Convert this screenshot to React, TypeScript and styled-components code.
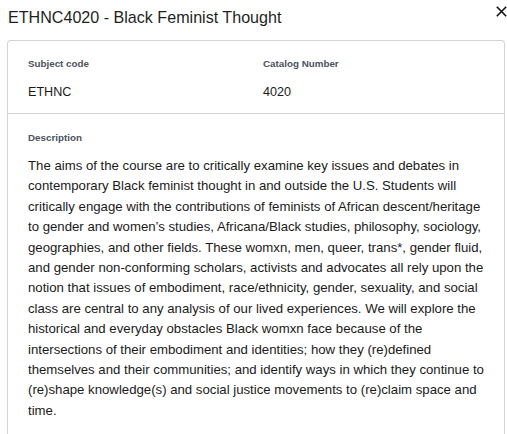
import React from 'react';
import styled, { createGlobalStyle } from 'styled-components';

const GlobalStyle = createGlobalStyle`
  html, body {
    margin: 0;
    padding: 0;
    background: #ffffff;
  }
  body {
    font-family: "Liberation Sans", Arial, sans-serif;
    color: #1a1a1a;
  }
  * {
    box-sizing: border-box;
  }
`;

// Modal shell
const Modal = styled.div`
  width: 507px;
  height: 434px;
  overflow: hidden;
  padding: 7px 0 0 7px;
`;

const Header = styled.div`
  display: flex;
  align-items: flex-start;
  justify-content: space-between;
  height: 33px;
`;

const Title = styled.h2`
  margin: 0;
  padding-left: 1px;
  font-size: 16.1px;
  font-weight: 400;
  line-height: 20px;
  color: #1f1f1f;
`;

const CloseButton = styled.button`
  border: none;
  background: none;
  padding: 0;
  margin-top: -1px;
  width: 11px;
  height: 11px;
  display: flex;
  cursor: pointer;
  color: #111;
`;

// Card
const Card = styled.div`
  margin-right: 2px;
  border: 1px solid #d3d4d8;
  border-bottom: none;
  border-radius: 4px 4px 0 0;
`;

const Section = styled.div<{ divided?: boolean }>`
  padding: ${props => (props.divided ? '18px 14px 16px 20px' : '17px 20px 13px')};
  border-top: ${props => (props.divided ? '1px solid #d3d4d8' : 'none')};
`;

const FieldGrid = styled.div`
  display: grid;
  grid-template-columns: 1fr 1fr;
  column-gap: 14px;
`;

const Field = styled.div`
  display: flex;
  flex-direction: column;
  gap: 14px;
`;

const Label = styled.div`
  font-size: 9.8px;
  font-weight: 700;
  color: #4b5260;
  line-height: 12px;
`;

const Value = styled.div`
  font-size: 12.6px;
  line-height: 16px;
  color: #1a1a1a;
`;

const Paragraph = styled.p`
  margin: 12px 0 0;
  font-size: 13.2px;
  line-height: 20.4px;
  color: #1a1a1a;
`;

const description =
  'The aims of the course are to critically examine key issues and debates in contemporary Black feminist thought in and outside the U.S. Students will critically engage with the contributions of feminists of African descent/heritage to gender and women\u2019s studies, Africana/Black studies, philosophy, sociology, geographies, and other fields. These womxn, men, queer, trans*, gender fluid, and gender non-conforming scholars, activists and advocates all rely upon the notion that issues of embodiment, race/ethnicity, gender, sexuality, and social class are central to any analysis of our lived experiences. We will explore the historical and everyday obstacles Black womxn face because of the intersections of their embodiment and identities; how they (re)defined themselves and their communities; and identify ways in which they continue to (re)shape knowledge(s) and social justice movements to (re)claim space and time.';

const App = () => {
  return (
    <>
      <GlobalStyle />
      <Modal>
        <Header>
          <Title>ETHNC4020 - Black Feminist Thought</Title>
          <CloseButton aria-label="Close">
            <svg width="11" height="11" viewBox="0 0 11 11">
              <path d="M0.8 0.8 L10.2 10.2 M10.2 0.8 L0.8 10.2" stroke="currentColor" strokeWidth="1.6" />
            </svg>
          </CloseButton>
        </Header>
        <Card>
          <Section>
            <FieldGrid>
              <Field>
                <Label>Subject code</Label>
                <Value>ETHNC</Value>
              </Field>
              <Field>
                <Label>Catalog Number</Label>
                <Value>4020</Value>
              </Field>
            </FieldGrid>
          </Section>
          <Section divided>
            <Label>Description</Label>
            <Paragraph>{description}</Paragraph>
          </Section>
        </Card>
      </Modal>
    </>
  );
};

export default App;
